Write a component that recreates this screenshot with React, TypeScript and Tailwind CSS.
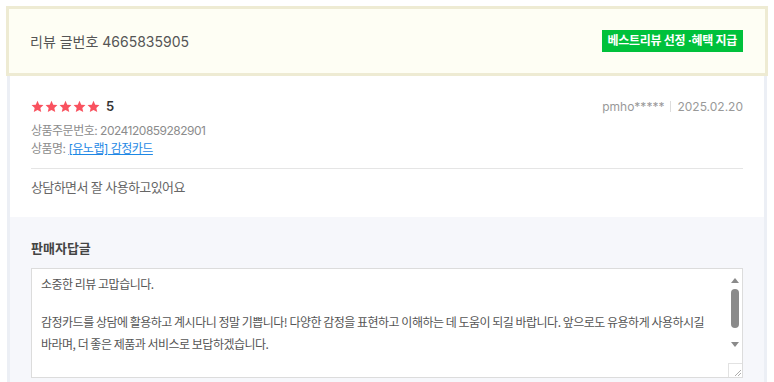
import React from 'react';

const font = { fontFamily: '"Inter", "Noto Sans CJK KR", sans-serif' };

const Star = () => (
  <svg width="13" height="13" viewBox="0 0 24 24" className="fill-[#f9525f]">
    <path d="M12 1.5l3.2 7.1 7.8.8-5.8 5.2 1.7 7.6L12 18.3l-6.9 3.9 1.7-7.6L1 9.4l7.8-.8z" />
  </svg>
);

export default function App() {
  return (
    <div className="w-[774px] h-[382px] overflow-hidden bg-white pt-[6px]" style={font}>
      <div className="mx-[6px] h-[70px] border-[3px] border-[#eeebd3] bg-[#fefef4] flex items-center justify-between pl-[21px] pr-[22px]">
        <span className="text-[14px] text-[#555]">리뷰 글번호 4665835905</span>
        <span className="bg-[#00c13b] text-white text-[12px] font-bold h-[22px] px-[6px] flex items-center tracking-[-0.3px]">
          베스트리뷰 선정 ·혜택 지급
        </span>
      </div>
      <div className="mx-[7px] border-x-[3px] border-[#eceff5] h-[320px]">
        <div className="bg-white px-[21px] pt-[21px] pb-[20px]">
          <div className="flex items-center justify-between">
            <div className="flex items-center gap-[5px]">
              <div className="flex gap-[1px]">
                <Star /><Star /><Star /><Star /><Star />
              </div>
              <span className="text-[13px] font-semibold text-[#333] ml-[1px]">5</span>
            </div>
            <div className="flex items-center text-[12px] text-[#999]">
              <span>pmho*****</span>
              <span className="mx-[6px] w-px h-[11px] bg-[#ddd]" />
              <span>2025.02.20</span>
            </div>
          </div>
          <div className="mt-[5px] text-[12px] tracking-[-0.5px] text-[#8c8c8c] leading-[18px]">상품주문번호: 2024120859282901</div>
          <div className="text-[12px] tracking-[-0.5px] text-[#8c8c8c] leading-[18px]">
            상품명: <span className="text-[#1e88e5] underline">[유노랩] 감정카드</span>
          </div>
          <div className="mt-[10px] border-t border-[#e5e5e5]" />
          <div className="mt-[9px] text-[13px] tracking-[-0.6px] text-[#666]">상담하면서 잘 사용하고있어요</div>
        </div>
        <div className="bg-[#f6f7fb] px-[21px] pt-[22px] h-full">
          <div className="text-[13px] font-bold text-[#444]">판매자답글</div>
          <div className="mt-[9px] h-[110px] border border-[#dcdcdc] bg-white flex">
            <div
              className="flex-1 pl-[9px] pt-[4px] text-[12px] tracking-[-0.5px] leading-[22px] text-[#555] break-keep"
              style={{ fontFamily: '"Noto Sans CJK KR", sans-serif' }}
            >
              <p>소중한 리뷰 고맙습니다.</p>
              <p className="mt-[16px]">
                감정카드를 상담에 활용하고 계시다니 정말 기쁩니다! 다양한 감정을 표현하고 이해하는 데 도움이 되길 바랍니다. 앞으로도 유용하게 사용하시길 바라며, 더 좋은 제품과 서비스로 보답하겠습니다.
              </p>
            </div>
            <div className="w-[15px] flex flex-col items-center pt-[9px]">
              <div className="w-0 h-0 border-x-[4px] border-x-transparent border-b-[5px] border-b-[#8a8a8a]" />
              <div className="mt-[6px] w-[8px] h-[39px] rounded-full bg-[#8a8a8a]" />
              <div className="mt-[14px] w-0 h-0 border-x-[4px] border-x-transparent border-t-[5px] border-t-[#8a8a8a]" />
              <div className="mt-auto w-[14px] h-[14px] border-t border-l border-[#e2e2e2] flex items-end justify-end">
                <svg width="9" height="9" viewBox="0 0 9 9" stroke="#999" strokeWidth="0.8">
                  <path d="M8 2L2 8M8 5L5 8" />
                </svg>
              </div>
            </div>
          </div>
        </div>
      </div>
    </div>
  );
}
